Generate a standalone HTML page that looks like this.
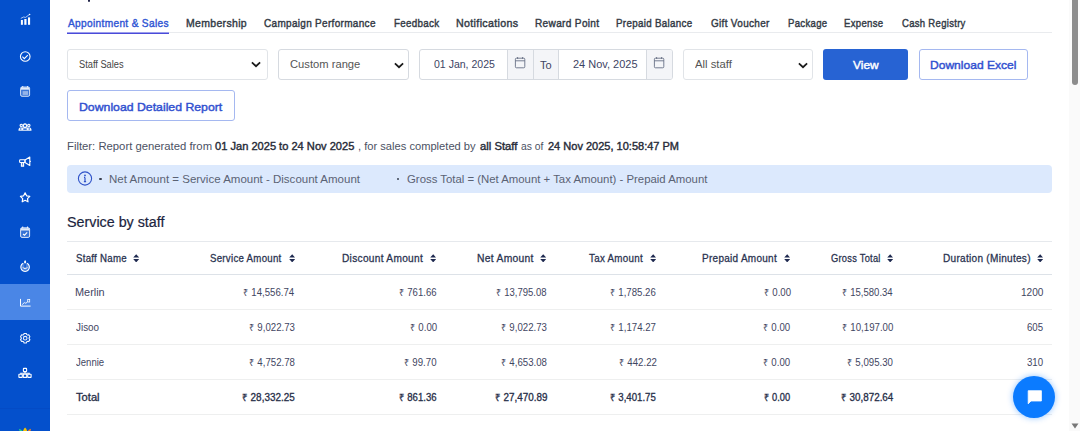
<!DOCTYPE html>
<html><head><meta charset="utf-8">
<style>
html,body{margin:0;padding:0;}
body{width:1080px;height:431px;overflow:hidden;position:relative;background:#fff;font-family:'Liberation Sans',sans-serif;}
.t{position:absolute;white-space:nowrap;line-height:1;transform-origin:0 0;}
.a{position:absolute;box-sizing:border-box;}
#sb{position:absolute;left:0;top:0;width:50px;height:431px;background:#0450cc;}
.ic{position:absolute;left:15px;width:20px;height:20px;}
.r{font-size:0.97em}
.hl{position:absolute;height:1px;left:67px;width:985px;}
</style></head><body>
<div id="sb">
  <div class="a" style="left:0;top:284px;width:50px;height:36px;background:#4a86e6"></div>
  <div class="a" style="left:0;top:408px;width:50px;height:1px;background:#044bc6"></div>
  <!-- 1 chart bars -->
  <svg class="ic" style="top:9px" viewBox="0 -0.50 20 20">
    <rect x="5.9" y="10.5" width="2" height="4.8" fill="#fff"/>
    <rect x="9.3" y="9.5" width="2.2" height="5.8" fill="#fff"/>
    <rect x="13" y="7.9" width="2.1" height="7.4" fill="#fff"/>
    <path d="M5.8 8.9 L8.6 7.5 L10.6 7.9 L14.4 5" stroke="#fff" stroke-width="0.85" fill="none" opacity="0.8"/>
    <circle cx="14.6" cy="4.9" r="0.75" fill="#fff"/>
  </svg>
  <!-- 2 check circle -->
  <svg class="ic" style="top:46px" viewBox="0 -0.40 20 20">
    <circle cx="10.25" cy="10.1" r="4.8" stroke="#fff" stroke-width="1.1" fill="none"/>
    <path d="M7.4 10.3 L9.3 12.2 L12.8 8.7" stroke="#fff" stroke-width="1.1" fill="none"/>
  </svg>
  <!-- 3 calendar -->
  <svg class="ic" style="top:81px" viewBox="0 -0.50 20 20">
    <rect x="5.6" y="5.5" width="9" height="9.3" rx="1.4" stroke="#fff" stroke-opacity="0.8" stroke-width="1" fill="#fff" fill-opacity="0.22"/>
    <rect x="6" y="6" width="8.2" height="2.2" fill="#fff" opacity="0.85"/>
    <path d="M7.7 4.4 V6 M12.5 4.4 V6" stroke="#fff" stroke-width="1.1" opacity="0.8"/>
    <rect x="7.6" y="9.6" width="5.4" height="3.8" fill="#fff" opacity="0.45"/>
  </svg>
  <!-- 4 group -->
  <svg class="ic" style="top:116px" viewBox="0 -0.80 20 20">
    <path fill-rule="evenodd" fill="#fff" opacity="0.95" d="M10 6.5 A2.3 2.3 0 1 1 9.99 6.5 Z M10 8 A0.95 0.95 0 1 0 10.01 8 Z
      M6.3 6.9 A1.75 1.75 0 1 1 6.29 6.9 Z M6.3 8.1 A0.6 0.6 0 1 0 6.31 8.1 Z
      M13.8 6.9 A1.75 1.75 0 1 1 13.79 6.9 Z M13.8 8.1 A0.6 0.6 0 1 0 13.81 8.1 Z"/>
    <path fill-rule="evenodd" fill="#fff" opacity="0.95" d="M3.5 13.9 Q3.2 10.9 5.6 10.6 L7.6 10.6 Q10 10 12.4 10.6 L14.4 10.6 Q16.8 10.9 16.5 13.9 Z
      M8.3 11.6 H11.7 V13 H8.3 Z M5 11.6 H6.4 V12.6 H5 Z M13.6 11.6 H15 V12.6 H13.6 Z"/>
  </svg>
  <!-- 5 megaphone -->
  <svg class="ic" style="top:151px" viewBox="0 -0.50 20 20">
    <rect x="4.6" y="8.2" width="5.4" height="2.8" rx="0.8" stroke="#fff" stroke-width="1.1" fill="none"/>
    <path d="M10 8.4 L14.8 5.6 V14 L10 11 Z" stroke="#fff" stroke-width="1.1" stroke-linejoin="round" fill="none"/>
    <path d="M6.4 11 V14.6 H8.6 V11" stroke="#fff" stroke-width="1.1" fill="#fff" fill-opacity="0.4"/>
    <circle cx="15.4" cy="9.8" r="0.6" fill="#fff"/>
  </svg>
  <!-- 6 star -->
  <svg class="ic" style="top:187px" viewBox="0 -0.50 20 20">
    <path d="M10.1 5.3 L11.6 8.3 L14.8 8.8 L12.5 11.1 L13 14.3 L10.1 12.8 L7.2 14.3 L7.7 11.1 L5.4 8.8 L8.6 8.3 Z" stroke="#fff" stroke-width="1.2" stroke-linejoin="round" fill="none"/>
  </svg>
  <!-- 7 calendar check -->
  <svg class="ic" style="top:222px" viewBox="0 -0.30 20 20">
    <rect x="5.6" y="5.5" width="9" height="9.6" rx="1.4" stroke="#fff" stroke-opacity="0.85" stroke-width="1" fill="#fff" fill-opacity="0.2"/>
    <rect x="6" y="6" width="8.2" height="2.2" fill="#fff" opacity="0.85"/>
    <path d="M7.7 4.3 V6 M12.5 4.3 V6" stroke="#fff" stroke-width="1.1" opacity="0.85"/>
    <path d="M8 11.7 L9.5 12.9 L12.2 10.1" stroke="#fff" stroke-width="1.1" fill="none"/>
  </svg>
  <!-- 8 timer -->
  <svg class="ic" style="top:256px" viewBox="0 -0.00 20 20">
    <path d="M8.2 7.3 A4.3 4.3 0 1 0 12 7.3" stroke="#fff" stroke-width="1.1" fill="#fff" fill-opacity="0.3"/>
    <path d="M7.9 11.2 A2.3 2.1 0 0 0 12.3 11.2" stroke="#fff" stroke-width="0.9" fill="none"/>
    <path d="M10.1 8 V11" stroke="#0450cc" stroke-width="1.3"/>
    <path d="M10.1 4 Q11.3 5.4 11.2 6.3 Q11 7.2 10.1 7.2 Q9.2 7.2 9 6.3 Q9 5.4 10.1 4 Z" fill="#fff"/>
  </svg>
  <!-- 9 chart line active -->
  <svg class="ic" style="top:292px" viewBox="0 -0.70 20 20">
    <path d="M5.5 6.2 V13.4 H15.6" stroke="#fff" stroke-width="1" fill="none"/>
    <path d="M7.2 11.9 L9.3 9.9 L10.9 10.6 L12.6 9" stroke="#fff" stroke-width="1" fill="none" opacity="0.9"/>
    <rect x="12.7" y="6.9" width="2" height="2.4" stroke="#fff" stroke-width="0.75" fill="none"/>
  </svg>
  <!-- 10 gear -->
  <svg class="ic" style="top:328px" viewBox="0 -0.00 20 20">
    <path d="M8.61 6.64 L9.10 5.43 L11.30 5.43 L11.79 6.64 L12.49 7.04 L13.78 6.86 L14.89 8.77 L14.08 9.79 L14.08 10.61 L14.89 11.63 L13.78 13.54 L12.49 13.36 L11.79 13.76 L11.30 14.97 L9.10 14.97 L8.61 13.76 L7.91 13.36 L6.62 13.54 L5.51 11.63 L6.32 10.61 L6.32 9.79 L5.51 8.77 L6.62 6.86 L7.91 7.04 Z" stroke="#fff" stroke-width="1.1" stroke-linejoin="round" fill="none" opacity="0.95"/>
    <circle cx="10.2" cy="10.2" r="1.8" stroke="#fff" stroke-width="1.1" fill="none" opacity="0.9"/>
  </svg>
  <!-- 11 sitemap -->
  <svg class="ic" style="top:363px" viewBox="0 -0.00 20 20">
    <rect x="8.4" y="5.4" width="3.2" height="3.2" rx="0.5" stroke="#fff" stroke-width="1.1" fill="none"/>
    <path d="M10 8.6 V10.3 M5.8 11.2 V10.3 H14.2 V11.2" stroke="#fff" stroke-width="1.1" fill="none"/>
    <rect x="3.9" y="11.2" width="3.4" height="3.2" rx="0.3" stroke="#fff" stroke-width="1.1" fill="none"/>
    <rect x="8.3" y="11.2" width="3.4" height="3.2" rx="0.3" stroke="#fff" stroke-width="1.1" fill="none"/>
    <rect x="12.7" y="11.2" width="3.4" height="3.2" rx="0.3" stroke="#fff" stroke-width="1.1" fill="none"/>
  </svg>
  <!-- 12 logo partial -->
  <svg class="a" style="left:15px;top:427px;width:20px;height:4px" viewBox="0 0 20 4">
    <path d="M10.1 0.6 Q11.2 1.6 12.2 4 H8 Q9 1.6 10.1 0.6 Z" fill="#f8c400"/>
    <path d="M3.8 1.8 Q6 2 7.6 4 H4.6 Z" fill="#1fc98f"/>
    <path d="M15.9 1.8 Q14 2 12.8 4 H15.6 Z" fill="#f5801f"/>
  </svg>
</div>
<!-- top title descender -->
<div class="a" style="left:87.6px;top:0;width:2.5px;height:1.8px;background:#23264a;border-radius:0 0 1px 1px"></div>

<!-- tabs underline -->
<div class="hl" style="top:32px;background:#e9ebee;"></div>
<div class="a" style="left:67px;top:33px;width:101.5px;height:1px;background:#4a4bd9"></div>
<div class="a" style="left:67px;top:32px;width:101.5px;height:1px;background:#9b9dec"></div>

<!-- controls -->
<div class="a" style="left:67px;top:49px;width:201px;height:31px;border:1px solid #e1e4e8;border-radius:3px"></div>
<div class="a" style="left:278px;top:49px;width:130.5px;height:31px;border:1px solid #d6dae0;border-radius:3px"></div>
<div class="a" style="left:419px;top:49px;width:253.5px;height:31px;border:1px solid #d6dae0;border-radius:3px;overflow:hidden">
  <div class="a" style="left:87px;top:0;width:25.7px;height:29px;background:#f4f5f8;border-left:1px solid #d6dae0"></div>
  <div class="a" style="left:112.7px;top:0;width:26.8px;height:29px;background:#f4f5f8;border-left:1px solid #d6dae0;border-right:1px solid #d6dae0"></div>
  <div class="a" style="left:226.4px;top:0;width:27px;height:29px;background:#f4f5f8;border-left:1px solid #d6dae0"></div>
</div>
<div class="a" style="left:683px;top:49px;width:129.5px;height:31px;border:1px solid #e1e4e8;border-radius:3px"></div>
<div class="a" style="left:823.3px;top:48.8px;width:84.3px;height:31.2px;background:#2763d3;border-radius:3px"></div>
<div class="a" style="left:918.8px;top:49px;width:109.2px;height:31px;border:1px solid #a5b8f0;border-radius:3px"></div>
<div class="a" style="left:67px;top:90px;width:168px;height:31px;border:1px solid #a5b8f0;border-radius:3px"></div>

<!-- chevrons -->
<svg class="a" style="left:250px;top:60px;width:12px;height:9px" viewBox="0 0 12 9"><path d="M1.9 2.3 L6 6.2 L10.1 2.3" stroke="#1a1a1a" stroke-width="1.75" fill="none"/></svg>
<svg class="a" style="left:392.5px;top:61px;width:12px;height:9px" viewBox="0 0 12 9"><path d="M1.9 2.3 L6 6.2 L10.1 2.3" stroke="#1a1a1a" stroke-width="1.75" fill="none"/></svg>
<svg class="a" style="left:796.8px;top:61px;width:12px;height:9px" viewBox="0 0 12 9"><path d="M1.9 2.3 L6 6.2 L10.1 2.3" stroke="#1a1a1a" stroke-width="1.75" fill="none"/></svg>
<!-- calendar icons -->
<svg class="a" style="left:513px;top:55px;width:14px;height:16px" viewBox="0 0 14 16"><rect x="2.4" y="3.2" width="9.4" height="9.6" rx="1" stroke="#687086" stroke-width="0.9" fill="none"/><path d="M2.4 5.8 H11.8" stroke="#687086" stroke-width="0.9"/><path d="M4.6 2 V4 M9.6 2 V4" stroke="#687086" stroke-width="0.9"/></svg>
<svg class="a" style="left:652px;top:55px;width:14px;height:16px" viewBox="0 0 14 16"><rect x="2.4" y="3.2" width="9.4" height="9.6" rx="1" stroke="#687086" stroke-width="0.9" fill="none"/><path d="M2.4 5.8 H11.8" stroke="#687086" stroke-width="0.9"/><path d="M4.6 2 V4 M9.6 2 V4" stroke="#687086" stroke-width="0.9"/></svg>

<!-- info box -->
<div class="a" style="left:67px;top:164.5px;width:985px;height:28.2px;background:#dce9fd;border-radius:4px"></div>
<svg class="a" style="left:76px;top:170px;width:18px;height:17px" viewBox="0 0 18 17"><circle cx="9" cy="8.5" r="6.6" stroke="#2f52c8" stroke-width="1.1" fill="none"/><circle cx="9" cy="5.4" r="0.9" fill="#2f52c8"/><path d="M9 7.4 V11.6 M7.9 11.6 H10.1 M8 7.4 H9" stroke="#2f52c8" stroke-width="1.2"/></svg>
<div class="a" style="left:99px;top:177.7px;width:2.6px;height:2.6px;border-radius:50%;background:#3a4050"></div>
<div class="a" style="left:396.7px;top:177.7px;width:2.6px;height:2.6px;border-radius:50%;background:#3a4050"></div>

<!-- table lines -->
<div class="hl" style="top:241px;background:#e6e9ed"></div>
<div class="hl" style="top:274px;background:#dde2e8"></div>
<div class="hl" style="top:309px;background:#eeefef"></div>
<div class="hl" style="top:344px;background:#eeefef"></div>
<div class="hl" style="top:379px;background:#eeefef"></div>
<div class="hl" style="top:414px;background:#eeefef"></div>
<!-- sort icons -->
<svg class="a" style="left:133.4px;top:253.6px;width:6.4px;height:8.6px" viewBox="0 0 6.4 8.6"><path d="M3.2 0.2 L6.2 3.6 H0.2 Z M0.2 5 H6.2 L3.2 8.4 Z" fill="#1f2a50"/></svg>
<svg class="a" style="left:288.5px;top:253.6px;width:6.4px;height:8.6px" viewBox="0 0 6.4 8.6"><path d="M3.2 0.2 L6.2 3.6 H0.2 Z M0.2 5 H6.2 L3.2 8.4 Z" fill="#1f2a50"/></svg>
<svg class="a" style="left:429.6px;top:253.6px;width:6.4px;height:8.6px" viewBox="0 0 6.4 8.6"><path d="M3.2 0.2 L6.2 3.6 H0.2 Z M0.2 5 H6.2 L3.2 8.4 Z" fill="#1f2a50"/></svg>
<svg class="a" style="left:540.3px;top:253.6px;width:6.4px;height:8.6px" viewBox="0 0 6.4 8.6"><path d="M3.2 0.2 L6.2 3.6 H0.2 Z M0.2 5 H6.2 L3.2 8.4 Z" fill="#1f2a50"/></svg>
<svg class="a" style="left:649.9px;top:253.6px;width:6.4px;height:8.6px" viewBox="0 0 6.4 8.6"><path d="M3.2 0.2 L6.2 3.6 H0.2 Z M0.2 5 H6.2 L3.2 8.4 Z" fill="#1f2a50"/></svg>
<svg class="a" style="left:783.6px;top:253.6px;width:6.4px;height:8.6px" viewBox="0 0 6.4 8.6"><path d="M3.2 0.2 L6.2 3.6 H0.2 Z M0.2 5 H6.2 L3.2 8.4 Z" fill="#1f2a50"/></svg>
<svg class="a" style="left:886.6px;top:253.6px;width:6.4px;height:8.6px" viewBox="0 0 6.4 8.6"><path d="M3.2 0.2 L6.2 3.6 H0.2 Z M0.2 5 H6.2 L3.2 8.4 Z" fill="#1f2a50"/></svg>
<svg class="a" style="left:1036.6px;top:253.6px;width:6.4px;height:8.6px" viewBox="0 0 6.4 8.6"><path d="M3.2 0.2 L6.2 3.6 H0.2 Z M0.2 5 H6.2 L3.2 8.4 Z" fill="#1f2a50"/></svg>

<div class="t" style="left:67.90px;top:18.00px;font-size:11px;font-weight:400;color:#2f55d4;letter-spacing:0.35px;-webkit-text-stroke:0.4px #2f55d4;transform:scaleX(0.9220)">Appointment &amp; Sales</div>
<div class="t" style="left:185.75px;top:18.00px;font-size:11px;font-weight:400;color:#333a45;letter-spacing:0.35px;-webkit-text-stroke:0.42px #333a45;transform:scaleX(0.9524)">Membership</div>
<div class="t" style="left:264.40px;top:18.00px;font-size:11px;font-weight:400;color:#333a45;letter-spacing:0.35px;-webkit-text-stroke:0.42px #333a45;transform:scaleX(0.9073)">Campaign Performance</div>
<div class="t" style="left:393.51px;top:18.00px;font-size:11px;font-weight:400;color:#333a45;letter-spacing:0.35px;-webkit-text-stroke:0.42px #333a45;transform:scaleX(0.8900)">Feedback</div>
<div class="t" style="left:456.13px;top:18.00px;font-size:11px;font-weight:400;color:#333a45;letter-spacing:0.35px;-webkit-text-stroke:0.42px #333a45;transform:scaleX(0.9698)">Notifications</div>
<div class="t" style="left:534.68px;top:18.00px;font-size:11px;font-weight:400;color:#333a45;letter-spacing:0.35px;-webkit-text-stroke:0.42px #333a45;transform:scaleX(0.9174)">Reward Point</div>
<div class="t" style="left:616.21px;top:18.00px;font-size:11px;font-weight:400;color:#333a45;letter-spacing:0.35px;-webkit-text-stroke:0.42px #333a45;transform:scaleX(0.8894)">Prepaid Balance</div>
<div class="t" style="left:711.10px;top:18.00px;font-size:11px;font-weight:400;color:#333a45;letter-spacing:0.35px;-webkit-text-stroke:0.42px #333a45;transform:scaleX(0.9062)">Gift Voucher</div>
<div class="t" style="left:787.53px;top:18.00px;font-size:11px;font-weight:400;color:#333a45;letter-spacing:0.35px;-webkit-text-stroke:0.42px #333a45;transform:scaleX(0.8705)">Package</div>
<div class="t" style="left:844.03px;top:18.00px;font-size:11px;font-weight:400;color:#333a45;letter-spacing:0.35px;-webkit-text-stroke:0.42px #333a45;transform:scaleX(0.8727)">Expense</div>
<div class="t" style="left:901.60px;top:18.00px;font-size:11px;font-weight:400;color:#333a45;letter-spacing:0.35px;-webkit-text-stroke:0.42px #333a45;transform:scaleX(0.8649)">Cash Registry</div>
<div class="t" style="left:78.57px;top:59.80px;font-size:10px;font-weight:400;color:#444;transform:scaleX(0.9255)">Staff Sales</div>
<div class="t" style="left:289.58px;top:59.10px;font-size:11px;font-weight:400;color:#555;transform:scaleX(1.0176)">Custom range</div>
<div class="t" style="left:434.10px;top:59.10px;font-size:11px;font-weight:400;color:#3d4463;transform:scaleX(0.9571)">01 Jan, 2025</div>
<div class="t" style="left:540.00px;top:59.90px;font-size:11px;font-weight:400;color:#3d4463;transform:scaleX(1.0000)">To</div>
<div class="t" style="left:573.30px;top:59.10px;font-size:11px;font-weight:400;color:#3d4463;transform:scaleX(0.9984)">24 Nov, 2025</div>
<div class="t" style="left:694.70px;top:59.10px;font-size:11px;font-weight:400;color:#555;transform:scaleX(1.0278)">All staff</div>
<div class="t" style="left:852.60px;top:60.00px;font-size:11.5px;font-weight:400;color:#ffffff;-webkit-text-stroke:0.42px #ffffff;transform:scaleX(1.0360)">View</div>
<div class="t" style="left:929.65px;top:60.00px;font-size:11.5px;font-weight:400;color:#3150d0;-webkit-text-stroke:0.42px #3150d0;transform:scaleX(1.0481)">Download Excel</div>
<div class="t" style="left:78.93px;top:101.60px;font-size:11.5px;font-weight:400;color:#3150d0;-webkit-text-stroke:0.42px #3150d0;transform:scaleX(1.0672)">Download Detailed Report</div>
<div class="t" style="left:66.72px;top:140.70px;font-size:10.5px;font-weight:400;color:#4b5163;transform:scaleX(1.0759)">Filter: Report generated from</div>
<div class="t" style="left:215.20px;top:140.70px;font-size:10.5px;font-weight:400;color:#272b38;-webkit-text-stroke:0.38px #272b38;transform:scaleX(1.0561)">01 Jan 2025 to 24 Nov 2025</div>
<div class="t" style="left:357.84px;top:140.70px;font-size:10.5px;font-weight:400;color:#4b5163;transform:scaleX(1.0609)">, for sales completed by</div>
<div class="t" style="left:479.80px;top:140.70px;font-size:10.5px;font-weight:400;color:#272b38;-webkit-text-stroke:0.38px #272b38;transform:scaleX(1.0743)">all Staff</div>
<div class="t" style="left:521.10px;top:140.70px;font-size:10.5px;font-weight:400;color:#4b5163;transform:scaleX(0.9826)">as of</div>
<div class="t" style="left:547.80px;top:140.70px;font-size:10.5px;font-weight:400;color:#272b38;-webkit-text-stroke:0.38px #272b38;transform:scaleX(1.0488)">24 Nov 2025, 10:58:47 PM</div>
<div class="t" style="left:108.50px;top:173.80px;font-size:10.5px;font-weight:400;color:#5a6274;transform:scaleX(1.0956)">Net Amount = Service Amount - Discount Amount</div>
<div class="t" style="left:407.00px;top:173.80px;font-size:10.5px;font-weight:400;color:#5a6274;transform:scaleX(1.0827)">Gross Total = (Net Amount + Tax Amount) - Prepaid Amount</div>
<div class="t" style="left:66.98px;top:214.50px;font-size:14px;font-weight:400;color:#1c2540;-webkit-text-stroke:0.2px #1c2540;transform:scaleX(1.0211)">Service by staff</div>
<div class="t" style="left:76.20px;top:252.50px;font-size:10.5px;font-weight:400;color:#2a3350;letter-spacing:0.3px;-webkit-text-stroke:0.28px #2a3350;transform:scaleX(0.9200)">Staff Name</div>
<div class="t" style="left:209.70px;top:252.50px;font-size:10.5px;font-weight:400;color:#2a3350;letter-spacing:0.3px;-webkit-text-stroke:0.28px #2a3350;transform:scaleX(0.9205)">Service Amount</div>
<div class="t" style="left:342.23px;top:252.50px;font-size:10.5px;font-weight:400;color:#2a3350;letter-spacing:0.3px;-webkit-text-stroke:0.28px #2a3350;transform:scaleX(0.9663)">Discount Amount</div>
<div class="t" style="left:477.32px;top:252.50px;font-size:10.5px;font-weight:400;color:#2a3350;letter-spacing:0.3px;-webkit-text-stroke:0.28px #2a3350;transform:scaleX(0.9807)">Net Amount</div>
<div class="t" style="left:588.70px;top:252.50px;font-size:10.5px;font-weight:400;color:#2a3350;letter-spacing:0.3px;-webkit-text-stroke:0.28px #2a3350;transform:scaleX(0.9328)">Tax Amount</div>
<div class="t" style="left:701.95px;top:252.50px;font-size:10.5px;font-weight:400;color:#2a3350;letter-spacing:0.3px;-webkit-text-stroke:0.28px #2a3350;transform:scaleX(0.9500)">Prepaid Amount</div>
<div class="t" style="left:830.50px;top:252.50px;font-size:10.5px;font-weight:400;color:#2a3350;letter-spacing:0.3px;-webkit-text-stroke:0.28px #2a3350;transform:scaleX(0.8839)">Gross Total</div>
<div class="t" style="left:943.24px;top:252.50px;font-size:10.5px;font-weight:400;color:#2a3350;letter-spacing:0.3px;-webkit-text-stroke:0.28px #2a3350;transform:scaleX(0.9567)">Duration (Minutes)</div>
<div class="t" style="left:75.13px;top:287.90px;font-size:10.2px;font-weight:400;color:#3f4662;transform:scaleX(1.0692)">Merlin</div>
<div class="t" style="left:243.46px;top:287.90px;font-size:10.2px;font-weight:400;color:#3f4662;transform:scaleX(0.9434)"><span class="r">₹</span> 14,556.74</div>
<div class="t" style="left:398.56px;top:287.90px;font-size:10.2px;font-weight:400;color:#3f4662;transform:scaleX(0.9385)"><span class="r">₹</span> 761.66</div>
<div class="t" style="left:496.47px;top:287.90px;font-size:10.2px;font-weight:400;color:#3f4662;transform:scaleX(0.9340)"><span class="r">₹</span> 13,795.08</div>
<div class="t" style="left:610.36px;top:287.90px;font-size:10.2px;font-weight:400;color:#3f4662;transform:scaleX(0.9447)"><span class="r">₹</span> 1,785.26</div>
<div class="t" style="left:763.56px;top:287.90px;font-size:10.2px;font-weight:400;color:#3f4662;transform:scaleX(0.9444)"><span class="r">₹</span> 0.00</div>
<div class="t" style="left:842.26px;top:287.90px;font-size:10.2px;font-weight:400;color:#3f4662;transform:scaleX(0.9358)"><span class="r">₹</span> 15,580.34</div>
<div class="t" style="left:1021.01px;top:287.90px;font-size:10.2px;font-weight:400;color:#3f4662;transform:scaleX(0.9905)">1200</div>
<div class="t" style="left:75.80px;top:322.90px;font-size:10.2px;font-weight:400;color:#3f4662;transform:scaleX(0.9696)">Jisoo</div>
<div class="t" style="left:248.93px;top:322.90px;font-size:10.2px;font-weight:400;color:#3f4662;transform:scaleX(0.9473)"><span class="r">₹</span> 9,022.73</div>
<div class="t" style="left:409.57px;top:322.90px;font-size:10.2px;font-weight:400;color:#3f4662;transform:scaleX(0.9473)"><span class="r">₹</span> 0.00</div>
<div class="t" style="left:501.43px;top:322.90px;font-size:10.2px;font-weight:400;color:#3f4662;transform:scaleX(0.9473)"><span class="r">₹</span> 9,022.73</div>
<div class="t" style="left:610.23px;top:322.90px;font-size:10.2px;font-weight:400;color:#3f4662;transform:scaleX(0.9473)"><span class="r">₹</span> 1,174.27</div>
<div class="t" style="left:763.47px;top:322.90px;font-size:10.2px;font-weight:400;color:#3f4662;transform:scaleX(0.9473)"><span class="r">₹</span> 0.00</div>
<div class="t" style="left:841.64px;top:322.90px;font-size:10.2px;font-weight:400;color:#3f4662;transform:scaleX(0.9473)"><span class="r">₹</span> 10,197.00</div>
<div class="t" style="left:1026.70px;top:322.90px;font-size:10.2px;font-weight:400;color:#3f4662;transform:scaleX(0.9473)">605</div>
<div class="t" style="left:75.80px;top:357.90px;font-size:10.2px;font-weight:400;color:#3f4662;transform:scaleX(0.9367)">Jennie</div>
<div class="t" style="left:248.93px;top:357.90px;font-size:10.2px;font-weight:400;color:#3f4662;transform:scaleX(0.9473)"><span class="r">₹</span> 4,752.78</div>
<div class="t" style="left:403.89px;top:357.90px;font-size:10.2px;font-weight:400;color:#3f4662;transform:scaleX(0.9473)"><span class="r">₹</span> 99.70</div>
<div class="t" style="left:501.43px;top:357.90px;font-size:10.2px;font-weight:400;color:#3f4662;transform:scaleX(0.9473)"><span class="r">₹</span> 4,653.08</div>
<div class="t" style="left:618.75px;top:357.90px;font-size:10.2px;font-weight:400;color:#3f4662;transform:scaleX(0.9473)"><span class="r">₹</span> 442.22</div>
<div class="t" style="left:763.47px;top:357.90px;font-size:10.2px;font-weight:400;color:#3f4662;transform:scaleX(0.9473)"><span class="r">₹</span> 0.00</div>
<div class="t" style="left:847.33px;top:357.90px;font-size:10.2px;font-weight:400;color:#3f4662;transform:scaleX(0.9473)"><span class="r">₹</span> 5,095.30</div>
<div class="t" style="left:1026.70px;top:357.90px;font-size:10.2px;font-weight:400;color:#3f4662;transform:scaleX(0.9473)">310</div>
<div class="t" style="left:76.00px;top:393.00px;font-size:10.2px;font-weight:400;color:#262e48;-webkit-text-stroke:0.3px #262e48;transform:scaleX(1.0952)">Total</div>
<div class="t" style="left:241.83px;top:393.00px;font-size:10.2px;font-weight:400;color:#262e48;-webkit-text-stroke:0.3px #262e48;transform:scaleX(0.9736)"><span class="r">₹</span> 28,332.25</div>
<div class="t" style="left:398.56px;top:393.00px;font-size:10.2px;font-weight:400;color:#262e48;-webkit-text-stroke:0.3px #262e48;transform:scaleX(0.9385)"><span class="r">₹</span> 861.36</div>
<div class="t" style="left:494.63px;top:393.00px;font-size:10.2px;font-weight:400;color:#262e48;-webkit-text-stroke:0.3px #262e48;transform:scaleX(0.9679)"><span class="r">₹</span> 27,470.89</div>
<div class="t" style="left:610.36px;top:393.00px;font-size:10.2px;font-weight:400;color:#262e48;-webkit-text-stroke:0.3px #262e48;transform:scaleX(0.9447)"><span class="r">₹</span> 3,401.75</div>
<div class="t" style="left:763.59px;top:393.00px;font-size:10.2px;font-weight:400;color:#262e48;-webkit-text-stroke:0.3px #262e48;transform:scaleX(0.9107)"><span class="r">₹</span> 0.00</div>
<div class="t" style="left:840.63px;top:393.00px;font-size:10.2px;font-weight:400;color:#262e48;-webkit-text-stroke:0.3px #262e48;transform:scaleX(0.9660)"><span class="r">₹</span> 30,872.64</div>

<!-- scrollbar -->
<div class="a" style="left:1069px;top:0;width:11px;height:431px;background:#fafafa"></div>
<div class="a" style="left:1071.8px;top:-6px;width:6px;height:91px;background:#8c8c8c;border-radius:3px"></div>
<svg class="a" style="left:1071px;top:422px;width:9px;height:8px" viewBox="0 0 9 8"><path d="M0.5 1.5 H7.5 L4 6.5 Z" fill="#777"/></svg>

<!-- chat button -->
<div class="a" style="left:1013px;top:376px;width:42px;height:42px;border-radius:50%;background:#0b7bff;box-shadow:0 0 6px rgba(11,123,255,0.45)"></div>
<svg class="a" style="left:1024px;top:387px;width:20px;height:20px" viewBox="0 0 20 20"><path d="M4.2 3.7 H17.4 V14 H7 L4.2 16.8 Z" fill="#fff" stroke="#fff" stroke-width="0.8" stroke-linejoin="round"/></svg>
</body></html>
